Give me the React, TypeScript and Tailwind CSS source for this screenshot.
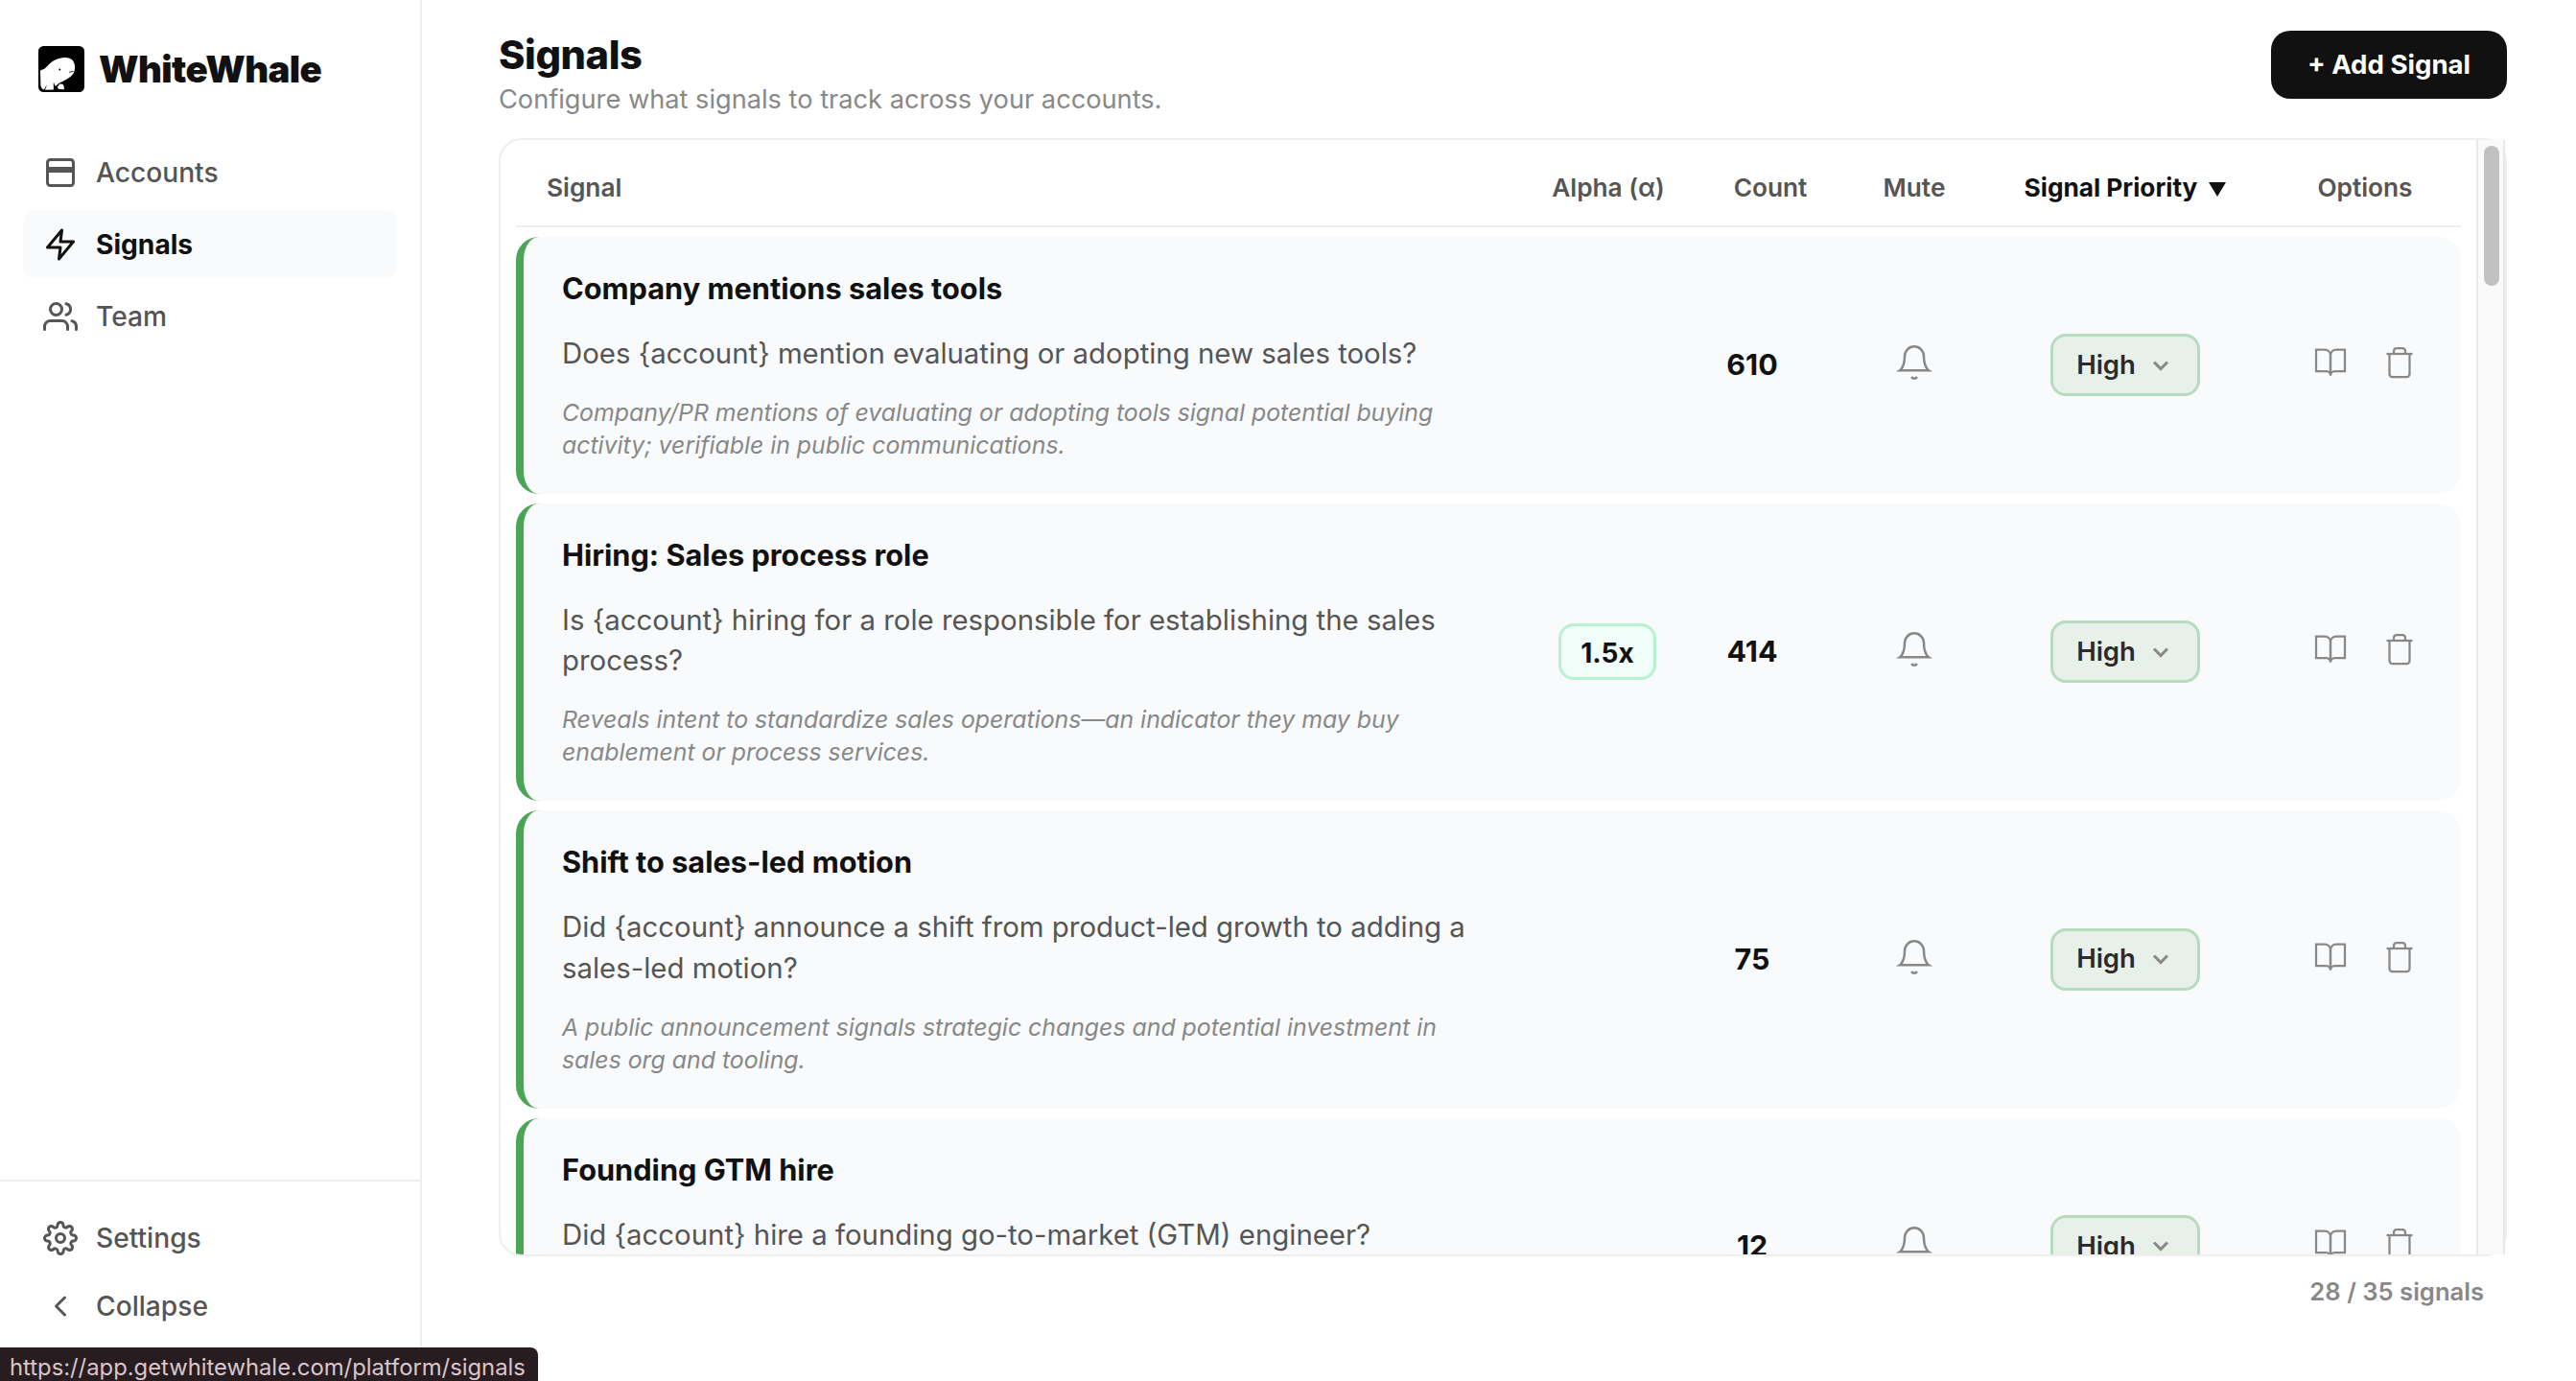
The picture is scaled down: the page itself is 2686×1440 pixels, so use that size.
import type React from "react"
import { FiChevronLeft, FiSettings, FiUsers, FiZap } from "react-icons/fi"
import clsx from "clsx"

type Signal = {
  title: string
  question: string
  reason?: string
  alpha?: string
  count: number
  priority: string
}

const signals: Signal[] = [
  {
    title: "Company mentions sales tools",
    question: "Does {account} mention evaluating or adopting new sales tools?",
    reason:
      "Company/PR mentions of evaluating or adopting tools signal potential buying activity; verifiable in public communications.",
    count: 610,
    priority: "High",
  },
  {
    title: "Hiring: Sales process role",
    question: "Is {account} hiring for a role responsible for establishing the sales process?",
    reason:
      "Reveals intent to standardize sales operations—an indicator they may buy enablement or process services.",
    alpha: "1.5x",
    count: 414,
    priority: "High",
  },
  {
    title: "Shift to sales-led motion",
    question: "Did {account} announce a shift from product-led growth to adding a sales-led motion?",
    reason:
      "A public announcement signals strategic changes and potential investment in sales org and tooling.",
    count: 75,
    priority: "High",
  },
  {
    title: "Founding GTM hire",
    question: "Did {account} hire a founding go-to-market (GTM) engineer?",
    count: 12,
    priority: "High",
  },
]

// Header and rows share the same columns
const columns = "grid grid-cols-[1fr_200px_140px_160px_280px_210px] items-center"

function WhaleLogo() {
  return (
    <svg viewBox="0 0 48 48" className="size-12 shrink-0">
      <rect width="48" height="48" rx="5.5" fill="#000" />
      <path
        d="M2 26.2C2.2 24.6 5 24.6 7 23.2C9.8 21 12 17.6 15.5 15.6C19.5 13.2 24 12 28.5 12.1C33 12.2 36 14 37 17.2C38.2 19.6 38.4 22 37.9 24.4C37.7 28 35 31 31.7 33.2C28.5 35.4 25.5 37 22.8 38C20.5 39 19.4 41 18.2 41.8C17 41.4 16.6 39.5 16 37.5C15.4 40 16.2 43 15.8 45.6L7 45.7C7.4 44 8.6 42.6 8.5 41C7.4 42 7.2 44.2 5.8 45.4C3.8 44.6 2.6 43 2.4 41Z"
        fill="#fff"
      />
      <path d="M20 42.6L22.2 39.6L25.4 39.8C26.6 41 27 43 26.8 45.2L22 45C20.6 44.6 19.8 43.6 20 42.6Z" fill="#fff" />
      <circle cx="22.3" cy="24.4" r="1" fill="#000" />
      <path d="M32 27.2L36.8 26.4" stroke="#000" strokeWidth="0.8" />
    </svg>
  )
}

function AccountsIcon() {
  return (
    <svg viewBox="0 0 24 24" fill="none" stroke="currentColor" strokeWidth="2" className="size-9">
      <rect x="3" y="3" width="18" height="18" rx="2" />
      <path d="M3 9h18M3 11h18" />
    </svg>
  )
}

function BellIcon() {
  return (
    <svg viewBox="0 0 24 24" fill="none" stroke="currentColor" strokeWidth="1.5" className="size-10">
      <path d="M18 8A6 6 0 0 0 6 8c0 7-3 9-3 9h18s-3-2-3-9" />
      <path d="M13.73 21a2 2 0 0 1-3.46 0" />
    </svg>
  )
}

function BookIcon() {
  return (
    <svg viewBox="0 0 24 24" fill="none" stroke="currentColor" strokeWidth="1.5" className="size-9">
      <path d="M2 3h6a4 4 0 0 1 4 4v14a3 3 0 0 0-3-3H2z" />
      <path d="M22 3h-6a4 4 0 0 0-4 4v14a3 3 0 0 1 3-3h7z" />
    </svg>
  )
}

function TrashIcon() {
  return (
    <svg viewBox="0 0 24 24" fill="none" stroke="currentColor" strokeWidth="1.5" className="size-9">
      <path d="M3 6h18" />
      <path d="M19 6v14a2 2 0 0 1-2 2H7a2 2 0 0 1-2-2V6m3 0V4a2 2 0 0 1 2-2h4a2 2 0 0 1 2 2v2" />
    </svg>
  )
}

function ChevronIcon() {
  return (
    <svg viewBox="0 0 24 24" fill="none" stroke="#888" strokeWidth="2.6" className="size-7">
      <path d="M6 9l6 6 6-6" />
    </svg>
  )
}

function NavItem({ icon, label, active }: { icon: React.ReactNode; label: string; active?: boolean }) {
  return (
    <a
      className={clsx(
        "flex h-[71px] items-center gap-[19px] rounded-xl pl-[21px] text-[28.16px]",
        active ? "bg-[#f8fafc] font-bold text-[#111]" : "font-medium text-[#555]"
      )}
    >
      {icon}
      <span className="mt-0.5">{label}</span>
    </a>
  )
}

function Sidebar() {
  return (
    <aside className="flex w-[440px] shrink-0 flex-col border-r-2 border-[#eee]">
      <div className="flex items-center gap-[15px] pt-12 pl-10">
        <WhaleLogo />
        <span className="text-[38.4px] leading-[48px] font-black tracking-[-0.6px] text-[#111]">WhiteWhale</span>
      </div>
      <nav className="mt-12 flex flex-1 flex-col gap-1 px-6">
        <NavItem icon={<AccountsIcon />} label="Accounts" />
        <NavItem icon={<FiZap className="size-9" />} label="Signals" active />
        <NavItem icon={<FiUsers className="size-9" />} label="Team" />
      </nav>
      <div className="flex h-[210px] flex-col border-t-2 border-[#eee] px-6 pt-[23px]">
        <NavItem icon={<FiSettings className="size-9" />} label="Settings" />
        <NavItem icon={<FiChevronLeft className="size-9" />} label="Collapse" />
      </div>
    </aside>
  )
}

function TableHeader() {
  return (
    <div
      className={clsx(
        columns,
        "mt-[10px] h-[81px] shrink-0 border-b-2 border-[#eee] text-center text-[26.24px] font-semibold text-[#555]"
      )}
    >
      <span className="pl-8 text-left">Signal</span>
      <span className="pl-0.5">Alpha (α)</span>
      <span>Count</span>
      <span>Mute</span>
      <span className="flex items-center justify-center gap-3 font-bold text-[#111]">
        Signal Priority
        <svg viewBox="0 0 18 15" className="mt-1 h-[15px] w-[18px]">
          <path d="M0 0h18L9 15z" fill="#111" />
        </svg>
      </span>
      <span className="pl-[10px]">Options</span>
    </div>
  )
}

function SignalRow({ signal }: { signal: Signal }) {
  return (
    <div
      className={clsx(columns, "min-h-[268px] shrink-0 rounded-3xl border-l-8 border-[#4ca455] bg-[#f8fafc]")}
    >
      <div className="self-start py-[34px] pr-10 pl-10">
        <h3 className="text-[30.72px] leading-10 font-bold text-[#111]">{signal.title}</h3>
        <p className="mt-[27px] text-[29.36px] leading-[42.4px] text-[#555]">{signal.question}</p>
        <p className="mt-[22.6px] text-[24.83px] leading-[34px] text-[#888] italic">{signal.reason}</p>
      </div>
      <div className="flex justify-center pb-px">
        {signal.alpha && (
          <span className="flex h-[59px] w-[102px] items-center justify-center rounded-2xl border-3 border-[#b7f1d1] bg-[#f0fdf8] pt-0.5 text-[28px] font-bold text-[#111] [font-feature-settings:'calt'_0]">
            {signal.alpha}
          </span>
        )}
      </div>
      <div className="pr-[38px] text-center text-[30.4px] font-bold text-[#111]">{signal.count}</div>
      <div className="flex justify-center pb-1.5 text-[#888]">
        <BellIcon />
      </div>
      <div className="flex justify-center pb-px">
        <button className="flex h-[65px] items-center gap-3 rounded-2xl border-3 border-[#b7dbbf] bg-[#e8f1e9] px-6 text-[27.5px] font-semibold text-[#2b2b2b]">
          {signal.priority}
          <ChevronIcon />
        </button>
      </div>
      <div className="flex justify-center gap-9 pb-1.5 pl-[10px] text-[#888]">
        <BookIcon />
        <TrashIcon />
      </div>
    </div>
  )
}

function SignalsTable() {
  return (
    <div className="mt-5 flex h-[1166px] rounded-3xl border-2 border-[#eee]">
      <div className="flex flex-1 flex-col gap-[10px] overflow-hidden rounded-l-[22px] px-4">
        <TableHeader />
        {signals.map((signal) => (
          <SignalRow key={signal.title} signal={signal} />
        ))}
      </div>
      <div className="w-[30px] border-x-2 border-[#e8e8e8] bg-[#fafafa] px-[6px] pt-[6px]">
        <div className="h-[146px] w-4 rounded-full bg-[#c1c1c1]" />
      </div>
    </div>
  )
}

export default function App() {
  return (
    <div className="relative flex h-[1440px] w-[2686px] overflow-hidden bg-white font-['Inter',sans-serif]">
      <Sidebar />
      <main className="flex-1 pt-8 pr-[72px] pl-20">
        <header className="flex items-start justify-between">
          <div>
            <h1 className="text-[41.6px] leading-[50px] font-extrabold tracking-[-0.01em] text-[#111]">Signals</h1>
            <p className="pt-px text-[27.2px] leading-[41px] text-[#888]">
              Configure what signals to track across your accounts.
            </p>
          </div>
          <button className="h-[71px] w-[246px] rounded-[20px] bg-[#111] text-[27.6px] font-bold text-white">
            + Add Signal
          </button>
        </header>
        <SignalsTable />
        <div className="mt-5 pr-6 text-right text-[25.6px] leading-[34px] font-semibold text-[#888]">
          28 / 35 signals
        </div>
      </main>

      {/* Link preview in the corner of the window */}
      <div className="absolute bottom-0 left-0 flex h-[35px] w-[561px] items-center rounded-tr-lg bg-[#271c20] pt-[6px] pl-[10px] text-[23.8px] whitespace-nowrap text-[#d9c6ca]">
        https://app.getwhitewhale.com/platform/signals
      </div>
    </div>
  )
}
